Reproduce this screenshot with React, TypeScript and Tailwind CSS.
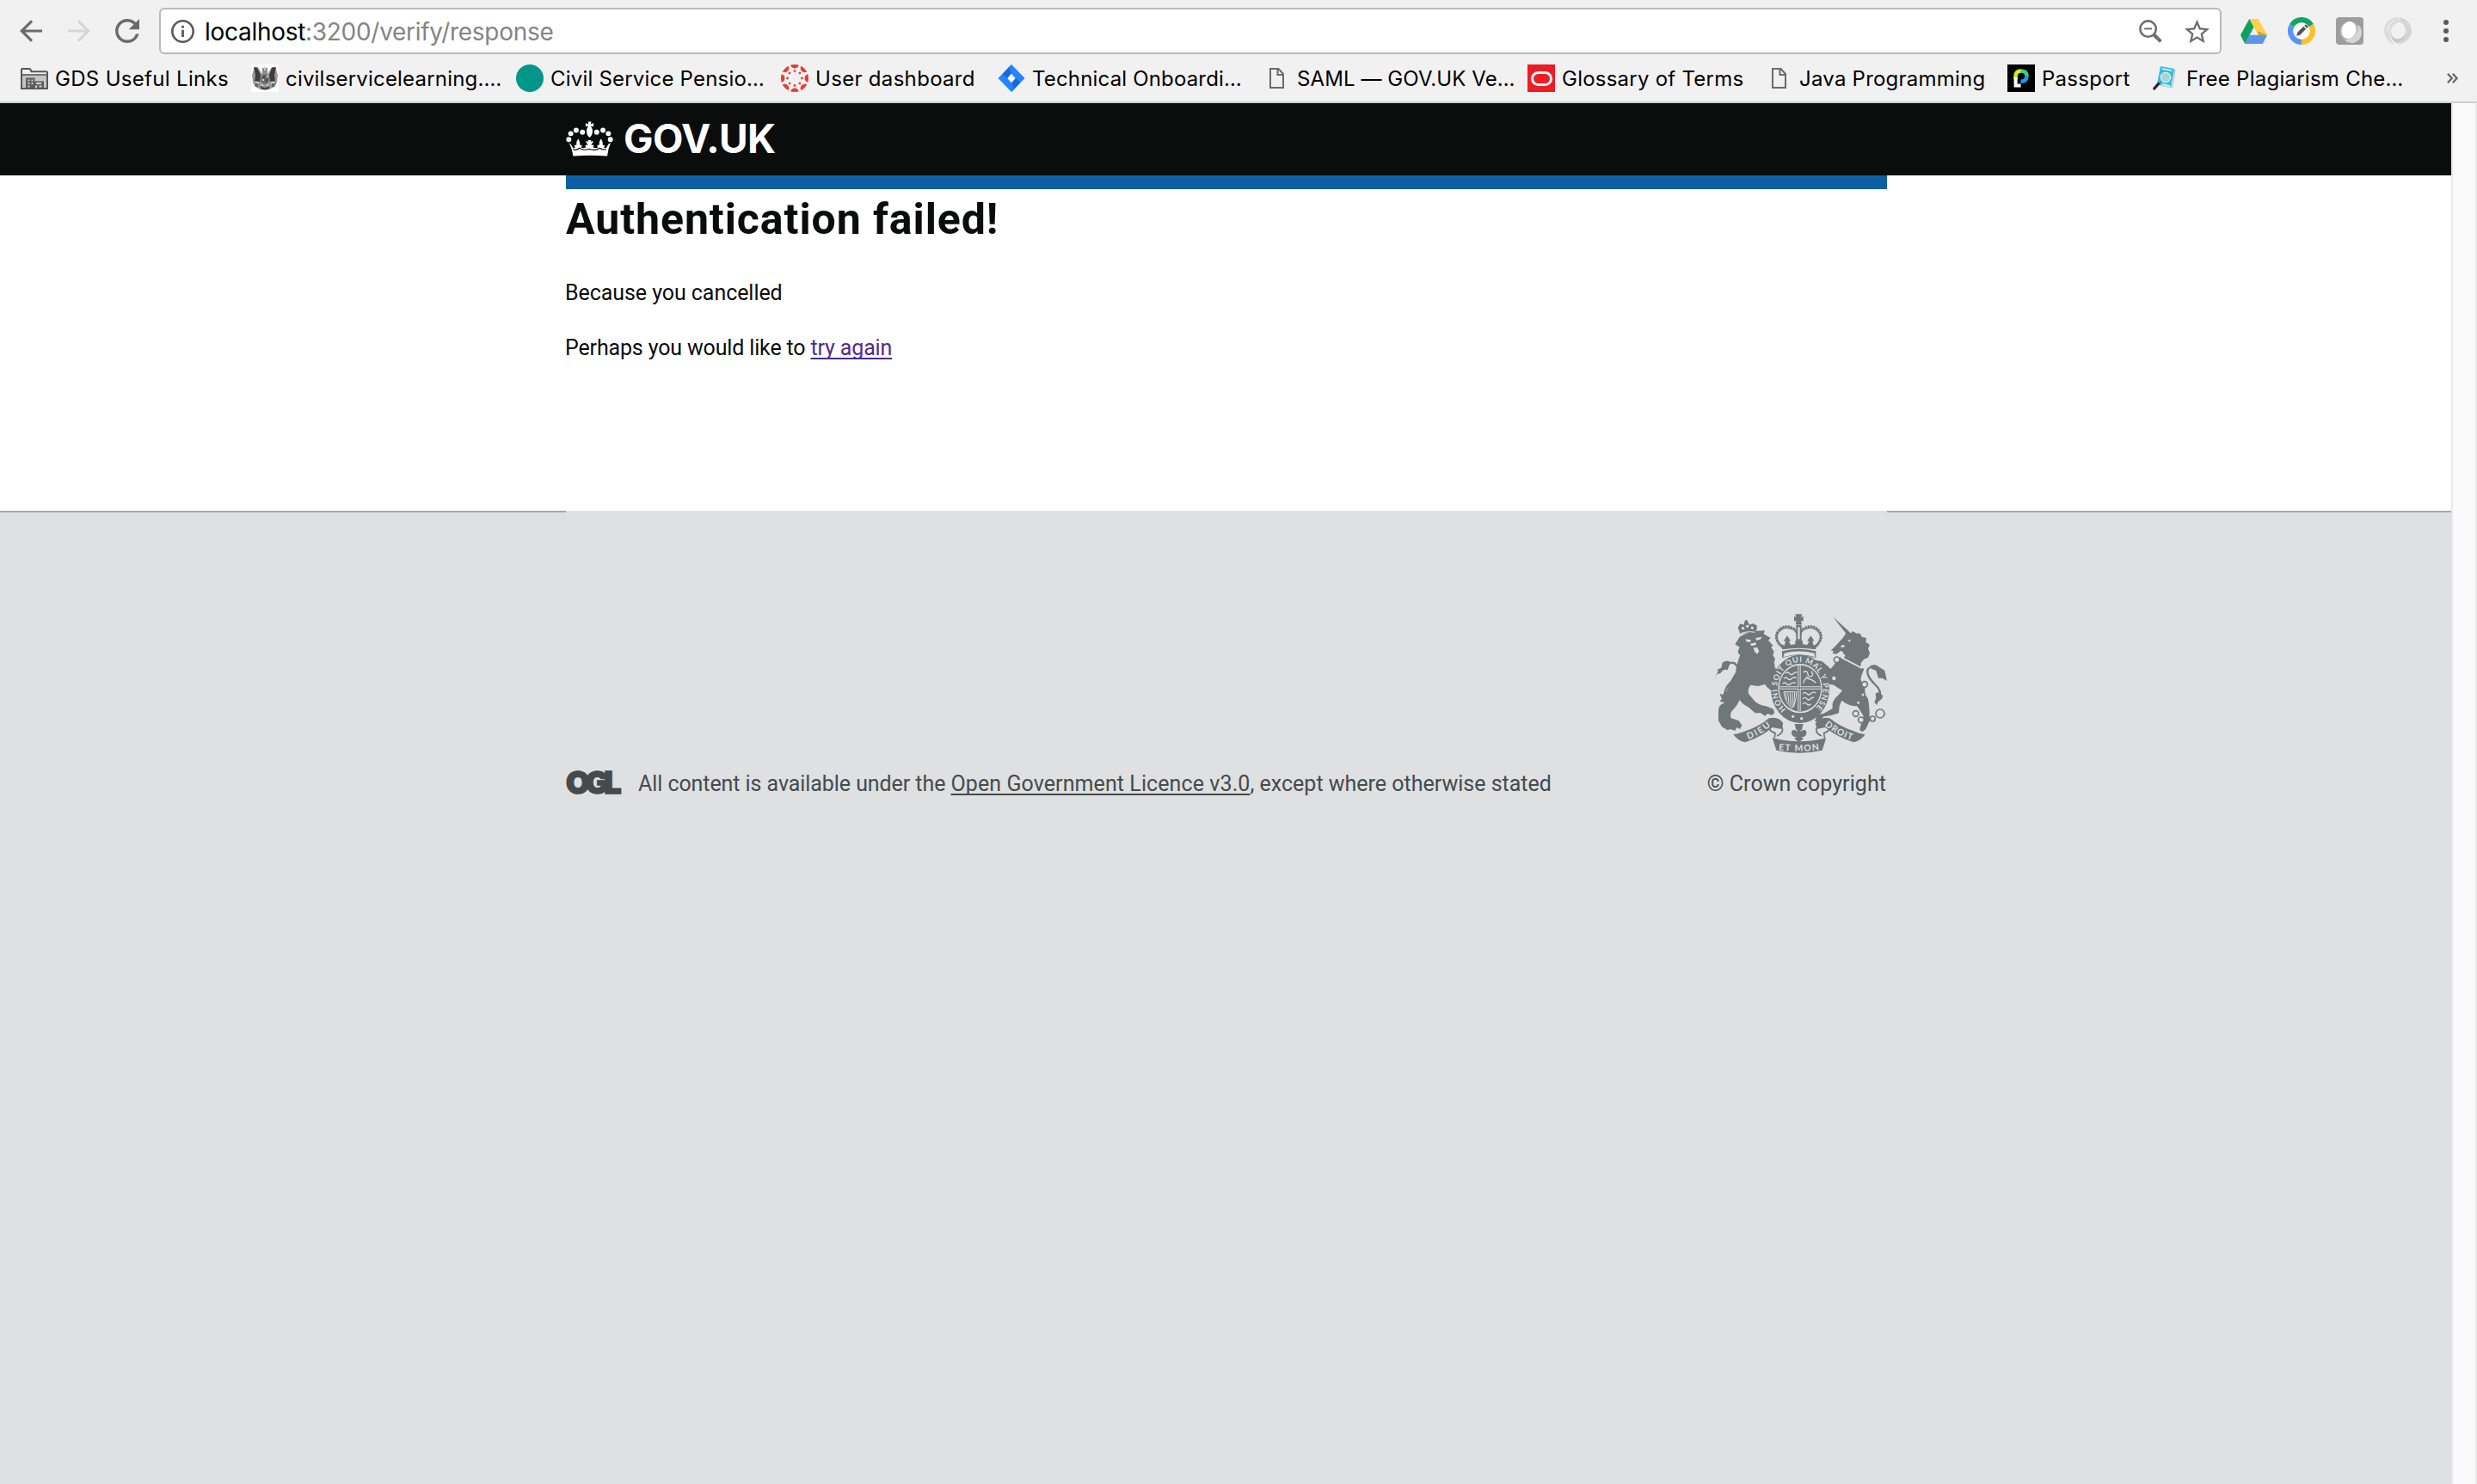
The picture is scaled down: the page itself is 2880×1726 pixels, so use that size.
import React from "react";

type IconProps = { className?: string };

const TEXT = "whitespace-nowrap";

/* ---------- toolbar icons ---------- */

const BackIcon = ({ className }: IconProps) => (
  <svg className={className} viewBox="0 0 26 26" fill="none" stroke="currentColor" strokeWidth="3.2">
    <path d="M26 13H2.5M14 1.3 2.3 13 14 24.7" />
  </svg>
);

const ReloadIcon = ({ className }: IconProps) => (
  <svg className={className} viewBox="4 4 16 16" fill="currentColor">
    <path d="M17.65 6.35A7.96 7.96 0 0 0 12 4c-4.42 0-7.99 3.58-7.99 8s3.57 8 7.99 8c3.73 0 6.84-2.55 7.73-6h-2.08A5.99 5.99 0 0 1 12 18c-3.31 0-6-2.69-6-6s2.69-6 6-6c1.66 0 3.14.69 4.22 1.78L13 11h7V4l-2.35 2.35z" />
  </svg>
);

const InfoIcon = () => (
  <svg className="size-[27px] text-[#5a5a5a]" viewBox="0 0 27 27">
    <circle cx="13.5" cy="13.5" r="12.2" fill="none" stroke="currentColor" strokeWidth="2.6" />
    <rect x="12.1" y="11.8" width="2.8" height="8.2" fill="currentColor" />
    <rect x="12.1" y="6.8" width="2.8" height="2.8" fill="currentColor" />
  </svg>
);

const ZoomOutIcon = () => (
  <svg className="size-[27px] text-[#6e6e6e]" viewBox="0 0 27 27" fill="none" stroke="currentColor">
    <circle cx="10.6" cy="10.6" r="9.2" strokeWidth="2.6" />
    <path d="M6.2 10.4h8.8" strokeWidth="2" />
    <path d="M17 17l8.4 8.4" strokeWidth="4" />
  </svg>
);

const StarIcon = () => (
  <svg className="size-[29px] text-[#6e6e6e]" viewBox="2 2 20 19" fill="currentColor">
    <path d="M22 9.24l-7.19-.62L12 2 9.19 8.63 2 9.24l5.46 4.73L5.82 21 12 17.27 18.18 21l-1.63-7.03L22 9.24zM12 15.4l-3.76 2.27 1-4.28-3.32-2.88 4.38-.38L12 6.1l1.71 4.04 4.38.38-3.32 2.88 1 4.28L12 15.4z" />
  </svg>
);

const DriveIcon = () => (
  <svg className="h-[29px] w-[31px]" viewBox="0 0 31 29">
    <path d="M10.3 0h10.4L31 18.8H20.7z" fill="#ffd04b" />
    <path d="M10.3 0l5.2 9.4L5.2 29 0 18.8z" fill="#0da25d" />
    <path d="M10.4 18.8H31L25.8 29H5.2z" fill="#5b95f2" />
    <path d="M20.7 18.8H31l-11-4.6z" fill="#caa22c" />
  </svg>
);

const ColourRingIcon = () => (
  <svg className="size-8" viewBox="0 0 32 32">
    <g fill="none" strokeWidth="6.4">
      <path d="M16 28.8A12.8 12.8 0 0 1 4.9 9.6" stroke="#5b95f2" />
      <path d="M4.9 9.6a12.8 12.8 0 0 1 22.2 0" stroke="#11a565" />
      <path d="M27.1 9.6A12.8 12.8 0 0 1 16 28.8" stroke="#fbc02d" />
    </g>
    <circle cx="16" cy="16" r="9.6" fill="#fff" />
    <path d="M10.2 21.8l1-4 7-7 3 3-7 7zM19.2 9.8l1-1q.8-.6 1.6.2l1.3 1.3q.8.8.2 1.6l-1 1z" fill="#555" />
  </svg>
);

const GreySquareIcon = () => (
  <svg className="size-8" viewBox="0 0 32 32">
    <rect width="32" height="32" rx="4" fill="#9d9d9d" />
    <circle cx="16.5" cy="16.5" r="11.6" fill="#b8b8b8" />
    <path d="M10 27a12 12 0 0 0 16-18q1 14-16 18z" fill="#d6d6d6" />
    <ellipse cx="15" cy="15" rx="8.4" ry="10" fill="#fff" transform="rotate(18 15 15)" />
  </svg>
);

const SwirlIcon = () => (
  <svg className="size-8" viewBox="0 0 32 32">
    <path d="M17 0C5 0 0 8 0 15s4 14 12 17c-5-5-5-11-4-16S13 5 21 5c-4-1-4-4-4-5z" fill="#dcdcdc" />
    <path d="M17 0c10 1 15 9 15 16S26 31 14 32c7-2 12-7 11-16S19 5 14 6c5-2 6-4 3-6z" fill="#d5d5d5" />
    <path d="M8 15c0 8 4 10 8 10s9-3 9-9c1 10-4 14-9 14S7 25 8 15z" fill="#c9c9c9" />
    <path d="M3 16c0-6 4-12 11-13C8 6 6 11 6 17z" fill="#e6e6e6" />
  </svg>
);

/* ---------- bookmark icons ---------- */

const FolderIcon = () => (
  <svg className="h-[25px] w-8" viewBox="0 0 32 25">
    <path d="M1 24V2q0-1 1-1h8q1 0 1.500 1l1 2.200H30q1 0 1 1V24z" fill="#f1f1f1" stroke="#555" strokeWidth="2" />
    <path d="M2 9h28v14H2z" fill="#c4c4c4" />
    <path d="M1 8h30" stroke="#555" strokeWidth="1.600" />
    <path d="M6 11.500h10.500v4H27v8H6z" fill="#5f5f5f" />
    <path d="M8.500 13.500h2v2h-2zM12.500 13.500h2v2h-2zM8.500 17h2v2h-2zM12.500 17h2v2h-2zM8.500 20.500h2v2h-2zM18 17h6v2h-6zM17 20.500h2v3h-2zM21.500 20.500h3v2h-3z" fill="#d0d0d0" />
  </svg>
);

const CrestFavicon = () => (
  <svg className="size-8" viewBox="0 0 32 32">
    <rect width="32" height="32" fill="#fff" />
    <path d="M1 12l3-9 4 0 4 7 8 0 4-7 4 0 3 9-1 9-3 5-6 3-5 1-5-1-6-3-3-5z" fill="#9a9a9a" />
    <path d="M3 3l4 1 4 8-1 8-6-1 1-7zM29 3l-5 1-3 8 1 8 6-1-1-7z" fill="#3d3d3d" />
    <path d="M13 4h6v6h-6z" fill="#8b8b8b" />
    <ellipse cx="16" cy="17" rx="5" ry="6" fill="#6a6a6a" />
    <path d="M14 13h2v3h-2zM17 17h2v3h-2zM10 25l6 2 6-2-2 4h-8z" fill="#484848" />
    <path d="M15 3h2v4h-2zM13 17h2v2h-2zM18 13h2v2h-2zM5 20h4v2H5zM23 20h4v2h-4zM12 23h2v2h-2zM18 23h2v2h-2z" fill="#ccc" />
    <path d="M4 22h4v4H5zM24 22h4l-1 4h-3z" fill="#666" />
  </svg>
);

const TealCircle = () => <span className="block size-8 rounded-full bg-[#009688]" />;

const CanvasIcon = () => (
  <svg className="size-8" viewBox="0 0 32 32" fill="#e63e30">
    <defs>
      <clipPath id="canvas-disc"><circle cx="16" cy="16" r="16" /></clipPath>
    </defs>
    <g clipPath="url(#canvas-disc)">
      {[0, 45, 90, 135, 180, 225, 270, 315].map((a) => (
        <g key={a} transform={`rotate(${a} 16 16)`}>
          <circle cx="16" cy="-0.500" r="5" />
          <circle cx="16" cy="7.600" r="1.400" />
        </g>
      ))}
    </g>
  </svg>
);

const JiraIcon = () => (
  <svg className="size-8" viewBox="0 0 32 32">
    <path d="M16 0l15.500 16L16 32 .5 16z" fill="#2684ff" />
    <path d="M16 0q-4.500 5.500 0 10.600L10.800 16l-5-5z" fill="#1a66dd" />
    <path d="M16 32q4.500-5.500 0-10.600l5.200-5.400 5 5z" fill="#1a66dd" />
    <path d="M16 10.800l4.600 5.200L16 21.200 11.400 16z" fill="#fff" />
  </svg>
);

const DocIcon = () => (
  <svg className="h-6 w-[17px]" viewBox="0 0 17 24" fill="none" stroke="#6b6b6b" strokeWidth="2">
    <path d="M1 1h9.500L16 7v16H1zM9.500 1v7H16" />
  </svg>
);

const OracleIcon = () => (
  <span className="flex size-8 items-center justify-center bg-[#ee1c25]">
    <span className="block h-[17px] w-[25px] rounded-full border-[3px] border-white" />
  </span>
);

const PassportIcon = () => (
  <svg className="size-8" viewBox="0 0 32 32" fill="none" strokeWidth="4.600">
    <rect width="32" height="32" fill="#000" />
    <path d="M9.500 17v-3q0-6.500 6.500-6.500" stroke="#d4ee1a" />
    <path d="M15.500 7.500q7 0 7 6" stroke="#35d37b" />
    <path d="M22.500 13q0 6.800-7 6.800" stroke="#1b9af0" />
    <path d="M9.600 15v9.600h6" stroke="#fff" strokeWidth="4" />
  </svg>
);

const PlagiarismIcon = () => (
  <svg className="size-8" viewBox="0 0 32 32">
    <path d="M11 3l17 3-4 22-17-4z" fill="#c9d3d6" />
    <path d="M10 2l16 3-4 21-16-3z" fill="#35bce0" />
    <path d="M12 5l11 2" stroke="#e8fbff" strokeWidth="1.600" />
    <path d="M12 23l9 2" stroke="#e8fbff" strokeWidth="1.500" />
    <circle cx="16" cy="15" r="5.600" fill="#8fdcf3" stroke="#dfe9ec" strokeWidth="1.400" />
    <path d="M14 11l5 2-4 4z" fill="#e3c76a" />
    <path d="M11 19.500l-4 4" stroke="#888" strokeWidth="2" />
    <path d="M7.500 22.500L2.800 28" stroke="#2a2a2a" strokeWidth="3.400" strokeLinecap="round" />
  </svg>
);

/* ---------- page drawings ---------- */

const CrownIcon = () => (
  <svg className="h-[41px] w-[55px]" viewBox="55 58 166 123" fill="#fff">
    <path d="M64 133q9 3 14 15 3 6 10 2-6-4-2-9 3 2 6 0-2-11 6-22 8 11 6 22 3 2 6 0 4 5-2 9 8 5 18-1-5-4-1-9 4 2 7 2-1-7-6-9v-7q4 3 8 3-1-3-2-5h12q-1 2-2 5 4 0 8-3v7q-5 2-6 9 3 0 7-2 4 5-1 9 10 6 18 1-6-4-2-9 3 2 6 0-2-11 6-22 8 11 6 22 3 2 6 0 4 5-2 9 7 4 10-2 5-12 14-15-9 20-12 47-60-5-120 0-3-27-15-47z" />
    <g fill="none" stroke="#0b0c0c" strokeWidth="3.500">
      <path d="M80 156q10 6 22-4 14 10 34 3 22 8 38-3 12 8 22 4" />
    </g>
    <circle cx="65" cy="122" r="9" />
    <circle cx="72" cy="101" r="9" />
    <circle cx="91" cy="89" r="9" />
    <circle cx="113" cy="96" r="9" />
    <circle cx="211" cy="122" r="9" />
    <circle cx="204" cy="101" r="9" />
    <circle cx="185" cy="89" r="9" />
    <circle cx="163" cy="96" r="9" />
    <path d="M133 59h11l-2 9q6-1 10-4v13q-4-3-9-3 1 5 4 9 4 7 0 19-3 10-9 13-6-3-9-13-4-12 0-19 3-4 4-9-5 0-9 3V64q4 3 10 4z" />
  </svg>
);

const RoyalArms = () => (
  <svg className="block h-[162px] w-[200px]" viewBox="72 72 600 486" fill="#6f777b">
    <defs>
      <path id="arms-garter" d="M320 405A80 92 0 1 1 418 405" />
      <path id="arms-dieu" d="M188 510Q228 496 270 461" />
      <path id="arms-droit" d="M454 461Q500 498 550 512" />
      <path id="arms-mon" d="M294 547Q366 556 438 546" />
    </defs>

    {/* lion */}
    <path d="M160 142l-8-22 8-14 12 4 4-12 10 0 6 12 12-4 14 6 0 14-8 14q-26-4-50 2z" />
    <circle cx="181" cy="98" r="5" />
    <path d="M158 152q38-22 88-22l-4 12 24 14-8 8 16 18-6 6 10 16-4 12 8 14-4 10 4 22 18 8-10 10-6 20 10 10-8 14 6 14-12 12-26-22-8-10-24 6-26-4q-12 14-6 32l20 24q12 14 40 18l26 10 4 14-10 8-14-6-10 8-14-10-20 0-22-20q-22-10-32-26-8 20-22 34-14 12-8 30l26 8 12 16-6 14-12-6-6 12-16-6-10 4-20-12-12-22 0-36q2-20 18-24 10-60 42-108 6-38 16-60-8-4-8-14l6-14-16-10z" />
    <path d="M96 268q40-46 54-10 4 28-26 56-22 22-18 54" fill="none" stroke="#6f777b" strokeWidth="7" />
    <path d="M72 300l6-18q8-14 2-16l14-6 4-18q14-10 28-2l-10 28q-14-6-24 10l-16 6zM88 350l12 4 6-14 10 8 2 18-14 14-16-2 8-10z" />
    <g fill="#dee0e2">
      <path d="M178 160l20 3-4 8-12-2zM214 156l22-4-6 9-14 3zM194 176l20-4 2 8-16 4z" />
      <path d="M206 190l14 0 6 12-6 10-10-8z" />
      <circle cx="170" cy="122" r="5" />
      <circle cx="185" cy="115" r="5" />
      <circle cx="202" cy="121" r="5" />
      <path d="M162 138q24-8 50-4l0 3q-24-4-48 4z" />
    </g>

    {/* unicorn */}
    <path d="M483 82l64 58-12 8z" />
    <path d="M494 182l24-26 14-22 12 8 8-10 14 8 12 0 6 12 16 4-2 14 14 10-6 12 6 18-6 14-14 6-16 18-34-14-20-18-6-14-6 0-14 10-14-2 4-8-10-2z" />
    <path d="M508 222l84 42-10 26q-4 10 2 20 16 18 10 40l12 18 4 28 2 48-14 30-12 10-10-8 14-48-22-34q-30 0-54-20l-8 20-2 24q-24 10-52 12l-20 20-12-4 10-24 20-2 32-18q-4-26 18-44l16-18-30-20-24-4-20 10-18-12-14-4 2-18 18 2-4-24 18-8-2-16-28 6-4-8 16-10 20 4 30 26z" />
    <path d="M650 280q-20-38-44-16-10 20 24 54 22 20 18 42" fill="none" stroke="#6f777b" strokeWidth="7" />
    <path d="M614 252q20-6 28 4l22 14 8 36-16-10-14 0-8-26-16-6zM632 350l10-6 4 8 12 4-4 12-12 10-6 12-8-10 6-14z" />
    <path d="M514 208l74 44-4 12-74-38z" fill="#dee0e2" />
    <path d="M522 226l8-18 8 16 10-8 8 18 10-8 6 18 10-2-2 14z" />
    <path d="M510 184l10-4 6 6-12 4zM534 164l12-2-4 8z" fill="#dee0e2" />
    <g fill="#dee0e2" stroke="#6f777b" strokeWidth="5">
      <circle cx="497" cy="232" r="10" />
      <circle cx="487" cy="297" r="9" />
      <circle cx="594" cy="318" r="10" />
      <circle cx="588" cy="354" r="7" />
      <circle cx="572" cy="382" r="7" />
      <circle cx="563" cy="420" r="10" />
      <circle cx="582" cy="442" r="10" />
      <circle cx="622" cy="438" r="9" />
      <circle cx="648" cy="420" r="15" />
    </g>

    {/* crown */}
    <path d="M352 73h24l-4 10 8-3v18l-8-3 3 14h-22l3-14-8 3V80l8 3z" />
    <path d="M308 190q-34-30-18-56 22-30 56-12 12 8 12 22M420 190q34-30 18-56-22-30-56-12-12 8-12 22" fill="none" stroke="#6f777b" strokeWidth="8" strokeLinecap="round" strokeDasharray="1 9" />
    <path d="M312 190q-34-30-18-54 20-24 48-10 14 6 16 20M416 190q34-30 18-54-20-24-48-10-14 6-16 20" fill="none" stroke="#6f777b" strokeWidth="4" />
    <path d="M355 110h19v60h-19z" />
    <path d="M361 118h7v42h-7z" fill="#dee0e2" />
    <path d="M308 196l-8-20 14 6 4-14-6-2 12-18 12 18-6 2 6 12 16-2 0-12h26v12l16 2 6-12-6-2 12-18 12 18-6 2 4 14 14-6-8 20q-56-10-112 0z" />
    <path d="M306 202q58-16 118 0l0 24q-60-20-118 0z" />
    <path d="M314 209q50-13 104 0l4 14q-56-18-112 0z" fill="#dee0e2" />

    {/* garter and shield */}
    <ellipse cx="369" cy="334" rx="102" ry="119" />
    <ellipse cx="369" cy="332" rx="77" ry="86" fill="#dee0e2" />
    <ellipse cx="369" cy="332" rx="73" ry="81" />
    <g stroke="#dee0e2" strokeWidth="4" fill="none">
      <path d="M366 252v160M298 330h142" strokeWidth="10" />
      <path d="M366 252v160M298 330h142" stroke="#6f777b" strokeWidth="4" />
      <path d="M318 280q8-8 14 0t14 0 12-2M312 298q8-8 14 0t14 0 16-2M308 316q8-8 14 0t14 0 18-2M378 350q8-8 14 0t14 0 18-2M378 368q8-8 14 0t14 0 10-2M378 386q8-8 14 0t14 0" />
      <path d="M380 276q14-10 16 6t18 4M380 314q4-22 20-16t24 14M390 290l10 10M408 272l6 12" />
      <path d="M318 346l4 26M326 346l4 38M334 346l2 46M342 346l0 50M350 346l-3 50M312 344h44q0 40-16 58-24-24-28-58z" strokeWidth="3" />
    </g>
    <text fill="#dee0e2" className="font-[Lato] text-[27px] font-bold">
      <textPath href="#arms-garter" textLength="425" lengthAdjust="spacing">HONI SOIT QUI MAL Y PENSE</textPath>
    </text>
    <path d="M310 410q58 34 118-4l-8 22q-50 40-106 4z" />
    <circle cx="344" cy="430" r="5" fill="#dee0e2" />
    <circle cx="374" cy="437" r="5" fill="#dee0e2" />

    {/* fleur and motto ribbon */}
    <path d="M350 456h30l-5 20-6 4q2 4 8-2 16-4 14 12-4 14-18 10l8 8-16 12-16-12 8-8q-14 4-18-10-2-16 14-12 6 6 8 2l-6-4z" />
    <path d="M136 492q22-2 50-14 42-14 74-42 36-8 50 18l-6 20-32-6q-38 34-96 52-26-6-40-28z" />
    <path d="M596 492q-22-2-48-14-42-14-76-42-30-8-50 18l6 20 28-6q42 34 100 52 26-6 40-28z" />
    <path d="M262 474q6 10 20 14l-2 16M304 464q12 22-16 34M472 474q-6 10-20 14l2 16M430 464q-14 22 14 34" fill="none" stroke="#6f777b" strokeWidth="5" />
    <path d="M272 504q94 26 188 0l-14 44q-80 18-160 0z" />
    <g fill="#dee0e2" className="font-[Lato] text-[31px] font-bold">
      <text><textPath href="#arms-dieu" textLength="92">DIEU</textPath></text>
      <text><textPath href="#arms-droit" textLength="108">DROIT</textPath></text>
      <text><textPath href="#arms-mon" textLength="142">ET MON</textPath></text>
    </g>
  </svg>
);

/* ---------- browser chrome ---------- */

type Bookmark = { label: string; icon: React.ReactNode; box: string; gap: string; tracking: string };

const BOOKMARKS: Bookmark[] = [
  { label: "GDS Useful Links", icon: <FolderIcon />, box: "w-[268px]", gap: "gap-2", tracking: "tracking-[0.316px]" },
  { label: "civilservicelearning.…", icon: <CrestFavicon />, box: "w-[308px]", gap: "gap-2", tracking: "tracking-[0.198px]" },
  { label: "Civil Service Pensio…", icon: <TealCircle />, box: "w-[308px]", gap: "gap-2", tracking: "tracking-[0.2px]" },
  { label: "User dashboard", icon: <CanvasIcon />, box: "w-[252px]", gap: "gap-2", tracking: "tracking-[0.31px]" },
  { label: "Technical Onboardi…", icon: <JiraIcon />, box: "w-[308px]", gap: "gap-2", tracking: "tracking-[0.169px]" },
  { label: "SAML — GOV.UK Ve…", icon: <DocIcon />, box: "w-[308px]", gap: "gap-2", tracking: "tracking-[0.088px]" },
  { label: "Glossary of Terms", icon: <OracleIcon />, box: "w-[276px]", gap: "gap-2", tracking: "tracking-[0.235px]" },
  { label: "Java Programming", icon: <DocIcon />, box: "w-[282px]", gap: "gap-2", tracking: "tracking-[0.23px]" },
  { label: "Passport", icon: <PassportIcon />, box: "w-[168px]", gap: "gap-2", tracking: "tracking-[0.266px]" },
  { label: "Free Plagiarism Che…", icon: <PlagiarismIcon />, box: "w-[308px]", gap: "gap-2", tracking: "tracking-[0.25px]" },
];

const Toolbar = () => (
  <div className="flex h-[72px] items-center pl-[23px]">
    <BackIcon className="size-[26px] text-[#6b6b6b]" />
    <BackIcon className="ml-[30px] size-[26px] rotate-180 text-[#d6d6d6]" />
    <ReloadIcon className="ml-[29px] size-[28px] text-[#6b6b6b]" />
    <div className="ml-[23px] flex h-[54px] w-[2398px] items-center rounded-[6px] border-2 border-[#b9b9b9] bg-white px-3">
      <InfoIcon />
      <span className={`${TEXT} ml-3 pt-px text-[28px] leading-9 tracking-[-0.29px] text-[#848484]`}>
        <span className="text-black">localhost</span>:3200/verify/response
      </span>
      <span className="ml-auto flex items-center gap-[26px]">
        <ZoomOutIcon />
        <StarIcon />
      </span>
    </div>
    <div className="ml-[22px] flex items-center gap-6">
      <DriveIcon />
      <ColourRingIcon />
      <GreySquareIcon />
      <SwirlIcon />
    </div>
    <div className="ml-[37px] flex flex-col gap-1">
      <span className="size-[6px] rounded-full bg-[#5a5a5a]" />
      <span className="size-[6px] rounded-full bg-[#5a5a5a]" />
      <span className="size-[6px] rounded-full bg-[#5a5a5a]" />
    </div>
  </div>
);

const BookmarksBar = () => (
  <div className="flex h-[46px] items-center pb-2 pl-6">
    {BOOKMARKS.map((b) => (
      <div key={b.label} className={`${b.box} ${b.gap} flex shrink-0 items-center`}>
        <span className="flex size-8 shrink-0 items-center justify-center">{b.icon}</span>
        <span className={`${TEXT} ${b.tracking} pt-[2px] text-[24px] leading-8 text-black`}>{b.label}</span>
      </div>
    ))}
    <svg className="ml-[35px] h-[12px] w-[13px] shrink-0" viewBox="0 0 13 12" fill="none" stroke="#6b6b6b" strokeWidth="2.400">
      <path d="M1 .8L5.800 6 1 11.200M6.800 .8L11.600 6l-4.800 5.200" />
    </svg>
  </div>
);

/* ---------- page ---------- */

export default function App() {
  return (
    <div className="flex h-[1726px] w-[2880px] flex-col overflow-hidden bg-white font-[Inter,sans-serif]">
      <div className="h-[120px] shrink-0 border-b-2 border-[#cfcfcf] bg-[#f1f1f1]">
        <Toolbar />
        <BookmarksBar />
      </div>

      <div className="flex flex-1">
        <div className="flex w-[2850px] flex-col pl-0 font-[Roboto,sans-serif]">
          <header className="h-[84px] bg-[#0b0c0c] px-[658px]">
            <div className="flex h-[82px] items-center">
              <CrownIcon />
              <span className={`${TEXT} ml-[12px] font-[Inter] text-[46px] font-bold leading-[60px] tracking-[-0.6px] text-white`}>GOV.UK</span>
            </div>
          </header>

          <main className="ml-[658px] h-[390px] w-[1536px] border-t-[16px] border-[#0d5fa3]">
            <h1 className={`${TEXT} text-[50px] font-bold leading-[70px] tracking-[0.93px] text-[#0b0c0c]`}>Authentication failed!</h1>
            <p className={`${TEXT} -ml-px mt-[31px] text-[25px] leading-10 tracking-[-0.06px] text-[#0b0c0c]`}>Because you cancelled</p>
            <p className={`${TEXT} -ml-px mt-6 text-[25px] leading-10 tracking-[-0.15px] text-[#0b0c0c]`}>
              Perhaps you would like to{" "}
              <a className="text-[#4c2c92] underline decoration-2 underline-offset-[3px] [text-decoration-skip-ink:none]">try again</a>
            </p>
          </main>

          <footer className="flex-1 bg-[#dee0e2] text-[25px] leading-10 text-[#454a4c]">
            <div className="flex h-[2px] justify-between">
              <span className="w-[658px] bg-[#a1acb2]" />
              <span className="w-[656px] bg-[#a1acb2]" />
            </div>
            <div className="ml-[658px] flex w-[1536px] items-end justify-between pt-[118px]">
              <div className="flex h-10 items-center">
                <span className="mb-1 w-[84px] font-[Inter] text-[36px] font-black leading-10 tracking-[-5.4px] [-webkit-text-stroke:1.5px_#454a4c]">OGL</span>
                <p className={TEXT}>
                  <span className="tracking-[-0.07px]">All content is available under the </span>
                  <a className="tracking-[0.09px] underline decoration-2 underline-offset-[3px] [text-decoration-skip-ink:none]">Open Government Licence v3.0</a>
                  <span>, except where otherwise stated</span>
                </p>
              </div>
              <div className="flex flex-col items-end">
                <RoyalArms />
                <p className={`${TEXT} mt-4 pr-px tracking-[0.07px]`}>© Crown copyright</p>
              </div>
            </div>
          </footer>
        </div>
        <div className="w-[30px] border-l-2 border-r-2 border-l-[#e8e8e8] border-r-[#ececec] bg-[#fafafa]" />
      </div>
    </div>
  );
}
